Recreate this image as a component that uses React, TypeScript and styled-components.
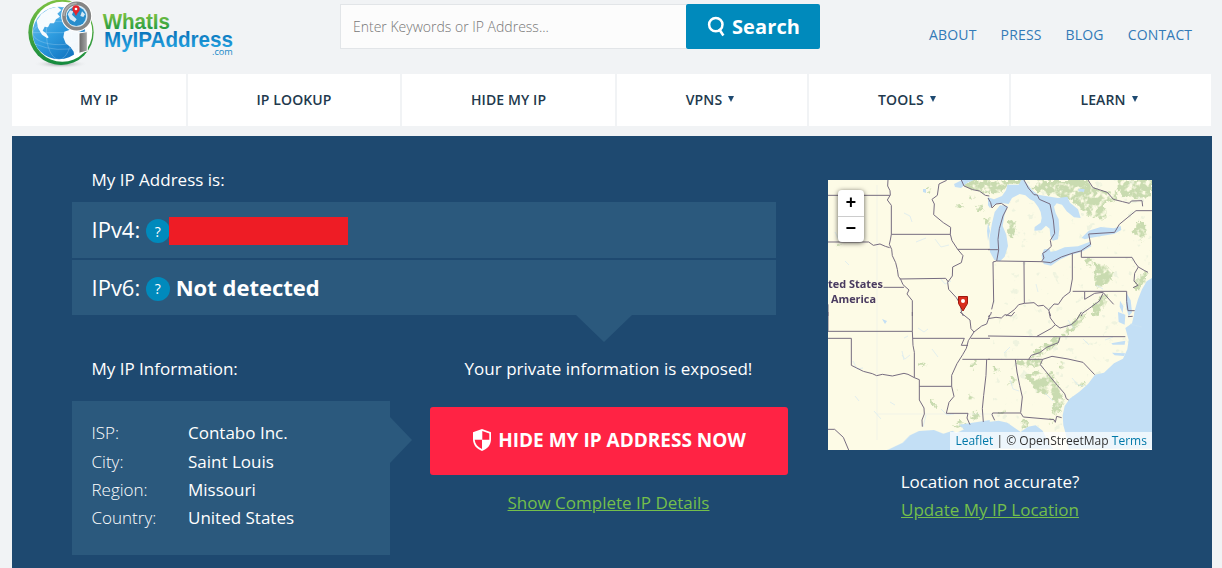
import React from "react";
import styled, { createGlobalStyle } from "styled-components";

const GlobalStyle = createGlobalStyle`
  * { box-sizing: border-box; }
  body { margin: 0; background: #f1f3f5; font-family: "Open Sans", sans-serif; overflow: hidden; }
  a { color: inherit; }
`;

const Page = styled.div`
  width: 1222px;
  height: 568px;
  overflow: hidden;
`;

const Header = styled.header`
  display: flex;
  height: 74px;
  padding-left: 20px;
`;

const LogoLink = styled.a`
  display: block;
  width: 230px;
  height: 72px;
  margin-right: 90px;
`;

const SearchForm = styled.form`
  display: flex;
  height: 45px;
  margin: 4px 0 0;
`;

const SearchInput = styled.input`
  width: 346px;
  height: 45px;
  padding: 0 12px;
  border: 1px solid #e2e5e8;
  border-right: 0;
  border-radius: 0;
  background: #fcfcfc;
  font: 300 14px "Open Sans", sans-serif;
  color: #555;
  outline: 0;
  &::placeholder { color: #777; opacity: 1; }
`;

const SearchButton = styled.button`
  display: flex;
  align-items: center;
  width: 134px;
  height: 45px;
  padding: 0 0 0 21px;
  gap: 7px;
  border: 0;
  border-radius: 2px;
  background: #008abc;
  color: #fff;
  font: 700 20px "Open Sans", sans-serif;
  letter-spacing: 0.1px;
`;

const TopLinks = styled.nav`
  display: flex;
  gap: 24px;
  margin: 24px 0 0 109px;
  font-size: 14px;
  font-weight: 500;
  line-height: 22px;
  letter-spacing: 0.17px;
  color: #337ab7;
  a { text-decoration: none; }
`;

const MainNav = styled.nav`
  display: grid;
  grid-template-columns: 174px 212px 213px 190px 200px 200px;
  gap: 2px;
  height: 52px;
  margin: 0 12px;
`;

const NavItem = styled.a<{ $menu?: boolean }>`
  display: flex;
  align-items: center;
  justify-content: center;
  gap: 6px;
  padding: 0 ${(p) => (p.$menu ? 4 : 0)}px 2px 0;
  background: #fff;
  color: #22394d;
  font-size: 14px;
  font-weight: 650;
  letter-spacing: 0.1px;
  text-decoration: none;
`;

const Caret = styled.span`
  border: 3.5px solid transparent;
  border-top: 6px solid #1e4a72;
  border-bottom: 0;
`;

const Panel = styled.main`
  display: flex;
  gap: 52px;
  width: 1200px;
  height: 432px;
  margin: 10px 0 0 12px;
  padding: 32px 60px 0;
  background: #1e4970;
  color: #fff;
  font-size: 17px;
`;

const Details = styled.section`
  width: 704px;
`;

const Label = styled.div`
  height: 24px;
  line-height: 24px;
  padding-left: 19.5px;
`;

const AddressRows = styled.div`
  position: relative;
  display: grid;
  grid-template-rows: 56px 55px;
  gap: 2px;
  margin-top: 10px;
  &::after {
    content: "";
    position: absolute;
    left: 504px;
    top: 113px;
    border: 28px solid transparent;
    border-top: 27px solid #2b597d;
    border-bottom: 0;
  }
`;

const AddressRow = styled.div`
  display: flex;
  align-items: center;
  padding: 0 0 2px 19.5px;
  background: #2b597d;
  font-size: 22px;
`;

const HelpBadge = styled.span`
  display: flex;
  align-items: center;
  justify-content: center;
  width: 24px;
  height: 24px;
  margin: 4px 0 0 5.5px;
  border-radius: 50%;
  background: #008abc;
  font-size: 14px;
  font-weight: 500;
`;

const Redaction = styled.span`
  width: 179px;
  height: 28px;
  margin: 4px 0 0 -1px;
  background: #ee1c25;
`;

const AddressValue = styled.strong`
  margin-left: 6px;
`;

const LowerRow = styled.div`
  display: flex;
  gap: 40px;
  width: 716px;
  margin-top: 42px;
`;

const InfoColumn = styled.div`
  width: 318px;
`;

const InfoBox = styled.dl`
  position: relative;
  display: grid;
  grid-template-columns: 96.5px 1fr;
  grid-template-rows: 29px 28px 28px 28px;
  height: 154px;
  margin: 20px 0 0;
  padding: 18px 19.5px;
  background: #2b597d;
  line-height: 28px;
  dt { font-weight: 300; }
  dd { margin: 0; font-weight: 500; }
  &::after {
    content: "";
    position: absolute;
    left: 318px;
    top: 16px;
    border: 23px solid transparent;
    border-left: 22px solid #2b597d;
    border-right: 0;
  }
`;

const ActionColumn = styled.div`
  display: flex;
  flex-direction: column;
  align-items: center;
  width: 357px;
  line-height: 24px;
`;

const HideButton = styled.a`
  display: flex;
  align-items: center;
  justify-content: center;
  gap: 7px;
  align-self: flex-start;
  width: 358px;
  height: 68px;
  margin: 26px 0 16px;
  padding: 0 0 2px 1px;
  border-radius: 3px;
  background: #ff2344;
  font-size: 19px;
  font-weight: 700;
  text-decoration: none;
`;

const GreenLink = styled.a`
  color: #74bf4b;
  text-decoration: underline;
`;

const Location = styled.aside`
  display: flex;
  flex-direction: column;
  align-items: center;
  width: 324px;
  padding-top: 12px;
  line-height: 28px;
`;

const MapFrame = styled.div`
  position: relative;
  width: 324px;
  height: 270px;
  margin-bottom: 18px;
  overflow: hidden;
  > svg { display: block; }
`;

const ZoomControl = styled.div`
  position: absolute;
  left: 10px;
  top: 10px;
  width: 26px;
  border-radius: 4px;
  background: #fff;
  box-shadow: 0 1px 5px rgba(0, 0, 0, 0.65);
`;

const ZoomButton = styled.div`
  height: 26px;
  text-align: center;
  color: #000;
  font: bold 18px/27px "Liberation Mono", monospace;
  & + & { border-top: 1px solid #ccc; line-height: 25px; }
`;

const Attribution = styled.div`
  position: absolute;
  right: 0;
  bottom: 0;
  height: 18px;
  padding: 0 5px;
  background: rgba(255, 255, 255, 0.7);
  color: #333;
  font-size: 12px;
  line-height: 18px;
  letter-spacing: 0.02px;
  white-space: nowrap;
  a { color: #0078a8; text-decoration: none; }
`;

const Logo = () => (
  <svg width="230" height="72" viewBox="0 0 690 216">
    <defs>
      <linearGradient id="green" x1="0" y1="0" x2="0" y2="1">
        <stop offset="0" stopColor="#7cc142" />
        <stop offset="1" stopColor="#138a3e" />
      </linearGradient>
      <linearGradient id="greenText" x1="0" y1="0" x2="0" y2="1">
        <stop offset=".2" stopColor="#7cc142" />
        <stop offset=".85" stopColor="#219a43" />
      </linearGradient>
      <linearGradient id="blue" x1="0" y1="0" x2="0" y2="1">
        <stop offset=".2" stopColor="#0873ba" />
        <stop offset=".9" stopColor="#25a5e2" />
      </linearGradient>
      <linearGradient id="globe" x1="0" y1="0" x2=".8" y2="1">
        <stop offset="0" stopColor="#7cc5ef" />
        <stop offset=".5" stopColor="#2f9de0" />
        <stop offset="1" stopColor="#0f6fbd" />
      </linearGradient>
      <linearGradient id="steel" x1="0" y1="0" x2="1" y2="0">
        <stop offset="0" stopColor="#666" />
        <stop offset="1" stopColor="#aaa" />
      </linearGradient>
      <radialGradient id="shadow">
        <stop offset="0" stopColor="#8d9094" />
        <stop offset="1" stopColor="#f1f3f5" stopOpacity="0" />
      </radialGradient>
    </defs>
    <ellipse cx="122" cy="192" rx="82" ry="13" fill="url(#shadow)" />
    <circle cx="123" cy="97" r="98" fill="url(#green)" />
    <circle cx="127" cy="95" r="90" fill="#fff" />
    <circle cx="117" cy="99" r="79" fill="url(#globe)" />
    <path d="M50 62 64 42 86 27 112 20 124 30 112 41 120 50 108 58 102 70 90 70 84 82 74 80 68 92 78 100 86 112 82 115 66 104 54 84ZM133 95 150 89 178 94 204 102 200 136 184 158 163 172 161 155 152 142 137 130 130 112Z" fill="#fff" opacity=".95" />
    <g fill="none" stroke="#fff" strokeWidth="1.200" opacity=".5">
      <ellipse cx="117" cy="99" rx="38" ry="79" />
      <ellipse cx="117" cy="99" rx="79" ry="35" />
      <path d="M45 132Q110 160 185 140M38 98H196M60 44Q120 65 180 44" />
    </g>
    <path d="m177 99 25-4v58l-25 7Z" fill="url(#steel)" stroke="#fff" strokeWidth="3" />
    <circle cx="170" cy="48" r="38" fill="#e7f4fc" stroke="#fff" strokeWidth="17" />
    <circle cx="170" cy="48" r="38" fill="#d6ebf7" stroke="#858585" strokeWidth="11" />
    <path d="M132 48A38 38 0 0 1 170 10" fill="none" stroke="#adadad" strokeWidth="5" />
    <circle cx="169" cy="49" r="29" fill="#278dcc" />
    <path d="M143 43 150 31 160 34 156 44 170 58 164 66 150 58ZM186 34 195 43 190 51 181 48Z" fill="#fff" opacity=".8" />
    <path d="M168 48C163 36 157 35 157 27a11 11 0 0 1 22 0c0 8-6 9-11 21Z" fill="#e5242c" />
    <circle cx="168" cy="27" r="4" fill="#fff" />
    <g fontFamily="Liberation Sans, sans-serif" strokeLinejoin="round">
      <text x="248" y="86" fontSize="65" fontWeight="700" fill="url(#greenText)" textLength="202" lengthAdjust="spacingAndGlyphs">WhatIs</text>
      <text x="252" y="140" fontSize="66" fontWeight="700" fill="url(#blue)" textLength="387" lengthAdjust="spacingAndGlyphs">MyIPAddress</text>
      <text x="576" y="165" fontSize="29" fontFamily="Open Sans, sans-serif" fontWeight="500" fill="#1687c7" textLength="62" lengthAdjust="spacingAndGlyphs">.com</text>
    </g>
  </svg>
);

const SearchIcon = () => (
  <svg width="18" height="22" viewBox="0 0 18 22" fill="none" stroke="#fff">
    <circle cx="8.800" cy="8.600" r="6.700" strokeWidth="2.500" />
    <path d="m12 13 4.400 6.400" strokeWidth="2.600" />
  </svg>
);

const ShieldIcon = () => (
  <svg width="18" height="22" viewBox="0 0 18 22">
    <path d="M9 0 18 3.300V10c0 6-3.400 9.700-9 12-5.600-2.300-9-6-9-12V3.300Z" fill="#fff" />
    <path d="M9.300 2 16.300 4.500V10.800H9.300ZM1.700 10.800H9V20C4.500 18 2.100 15 1.700 10.800Z" fill="#ff2344" />
  </svg>
);

const RegionMap = () => (
  <svg width="324" height="270" viewBox="0 0 324 270">
    <defs>
      <filter id="foliage" x="0" y="0" width="100%" height="100%" filterUnits="userSpaceOnUse" primitiveUnits="userSpaceOnUse">
        <feTurbulence type="fractalNoise" baseFrequency=".16" numOctaves="3" seed="8" result="noise" />
        <feDisplacementMap in="SourceGraphic" in2="noise" scale="9" xChannelSelector="R" yChannelSelector="G" result="rough" />
        <feColorMatrix in="noise" values="0 0 0 0 0  0 0 0 0 0  0 0 0 0 0  5 0 0 0 -1.600" result="grain" />
        <feComposite in="rough" in2="grain" operator="in" />
      </filter>
      <filter id="specks" x="0" y="0" width="100%" height="100%">
        <feTurbulence type="fractalNoise" baseFrequency=".12" numOctaves="3" seed="21" />
        <feColorMatrix values="0 0 0 0 .82  0 0 0 0 .88  0 0 0 0 .72  12 0 0 0 -8" />
      </filter>
    </defs>
    <rect width="324" height="270" fill="#fdfbe6" />
    <rect x="165" width="159" height="270" filter="url(#specks)" opacity=".7" />

    {/* vegetation */}
    <g fill="#c9dbb0" filter="url(#foliage)">
      <g transform="translate(-4 -4) scale(.33333)">
        <path d="M415 18 450 12H498V55L470 45 440 40 418 28ZM397 88l12-6 12 8-6 8-17-1ZM457 90l18-5 4 18-12 8-10-8ZM436 62l14-4 8 10-12 3ZM480 130l17-8v30l-12-8ZM38 208l14 0-5 8ZM308 38l10-4 2 12-10 2Z" />
      </g>
      <g transform="translate(160 -4) scale(.33333)">
        <path d="M0 22 40 12 108 12 100 28 60 22 42 50 20 52 0 42ZM142 12H300L322 40 385 48 392 66 350 84 356 128 300 120 278 98 250 70 170 52 140 42ZM392 12H492V64L440 66 392 50Z" />
        <path d="m62 136 16-4 8 12-7 10 6 16-14 12-17-7 4-15ZM440 150l20-16 14 8 2 28-14 24-20-8-5-20ZM320 260l36 10 22 20-8 30-48 14-6-40ZM292 252l20-5 4 20-18 8ZM440 318l20-26 20-5-12 40-22 20Z" />
        <path d="m310 410 30-60 20 10-28 60Z" />
      </g>
      <g transform="translate(-4 132) scale(.33333)">
        <path d="m442 152 14-10 3 12-13 15-7-6ZM318 258l8 0 8 16 10 10-4 8-14-14ZM432 246l8-5 10 20-15 2ZM445 300l15-4 8 18-6 10-20-4ZM392 230l8 2-3 10ZM287 154l22 2-6 5-14 0ZM390 340l20-10 28 4 18 30-20 0Z" />
      </g>
      <g transform="translate(160 132) scale(.33333)">
        <path d="m86 145 72-3 8 14-30 10-28 0-22-8ZM126 136l34-30 40-30 20 0-18 28-42 26ZM220 70l52-58 25-12-8 24-28 26-28 26ZM60 216l22-22 4 6-18 20ZM210 155l12-2 6 12-12 6ZM272 210l20 4-12 14-9-8ZM16 170l16 0 4 12-14 0ZM104 332l20-3-2 10-20 10-8-6ZM182 322l14 0 1 14-12-2ZM34 298l22 2-9 6-12-1Z" />
        <path d="M110 195 140 176 165 185 196 180 205 205 220 230 228 254 226 290 205 308 190 300 200 270 180 246 150 240 130 218Z" />
      </g>
    </g>

    {/* water */}
    <g fill="#c3dff5">
      <g transform="translate(160 -4) scale(.33333)">
        <path d="M6 96 22 84 36 80 62 84 72 66 95 54 112 58 126 70 138 76 151 94 158 108 161 126 158 140 140 153 139 164 160 163 174 149 185 158 187 180 194 194 210 190 214 160 212 130 203 112 198 92 206 82 222 86 236 106 258 124 278 126 270 100 246 80 238 62 210 66 150 56 132 42 108 12 100 12 92 26 58 26 54 43 42 60 18 70 0 64 0 88Z" />
        <path d="M36 88 60 90 50 115 44 150 55 176 60 210 50 242 36 256 19 252 6 228 4 188 12 142 20 108Z" />
        <path d="M161 242 176 230 205 224 230 214 270 211 306 197 310 211 280 228 244 238 215 251 189 269 167 264ZM281 185 302 164 338 153 378 157 398 150 400 162 378 174 340 180 306 186 290 190ZM160 240l8-20 16-2 5 12-16 17ZM272 38l18 1-2 9-17-2Z" />
        <path d="M492 306 476 316 462 340 450 370 440 404 438 424H504V306ZM414 348l14 25 4 36-10 12-8-28ZM396 374l10 16-2 22-9-20Z" />
      </g>
      <g transform="translate(-4 132) scale(.33333)">
        <path d="M190 414 236 392 258 370 285 357 330 354 358 365 386 356 396 364 420 352 405 338 435 334 460 330 498 324V420H190Z" />
      </g>
      <g transform="translate(160 132) scale(.33333)">
        <path d="M0 330 32 326 58 332 86 352 98 360 120 344 143 340 164 356 182 392 196 410H0ZM440 0 432 34 412 48 422 84 418 112 405 140 378 154 348 182 321 188 300 216 274 239 245 260 230 282 224 310 226 340 234 368 242 410H492V0Z" />
        <path d="m390 0 22 8-2 30-18-8ZM370 94l42-8-2 12-36 0ZM372 122l40 2-4 8-28-2Z" />
      </g>
    </g>
    <g fill="none" stroke="#cde4f3" strokeWidth=".7" opacity=".8">
      <path d="m7 52 4 8 2-4M17 81l4 4M76 33l6 3 2 6M88 62l10-4M107 59l6 8 8-2M112 98l5 6 6-3M27 101l10 5M90 148l6 4 4-3M74 175l3 4 5-4M76 158l4-2M25 181l4 8 6-1M74 171l2 9M27 216l4 5M46 231l7 8M62 222l5 3M104 169l6 8M113 229l6 6 7-1M182 200l3 9 6 2M244 198l6 7 6 1M255 159l6 6M277 160l8-3M208 104l2 8M268 105l7 4M176 173l6-6M302 144l12 3M217 213l8 8M240 140l6 9M98 235l-3 12" />
      <path d="M49 234H164M49 5V260" opacity=".4" />
    </g>
    <g fill="#c3dff5">
      <path d="m95 9 3 0 0 4-3-1ZM126 4l8-4h12l-7 3-6 5-6-1ZM160 43l2 8-2 10-1-10ZM54 139l5 2-2 3Z" />
    </g>

    {/* state borders */}
    <g fill="none" stroke="#756b80" strokeWidth="3" strokeLinejoin="round">
      <g transform="translate(-4 -4) scale(.33333)">
        <path d="M12 58H198M192 12 191 30 198 44 199 57 190 72 202 88V175L199 192 196 205 203 220 205 239 215 260 220 280 223 301 230 310 237 326 255 342 249 354 265 374V420M12 198H134L148 208 168 204 184 211 197 215M202 175H379L380 154 358 140 329 116 331 84 324 70 340 58 345 24 368 13M379 175 384 194 401 220 417 239 412 260 386 273 385 300 371 319 374 340 397 365 409 385 413 410 418 420M227 309 365 307 373 318M401 220H498M178 334H240M412 12 420 30 446 41 466 45 484 58 496 60M12 385V420" />
      </g>
      <g transform="translate(160 -4) scale(.33333)">
        <path d="M0 66 8 80 12 96 24 84 40 82 58 94 45 120 34 158 30 190 32 222 26 255 15 258 17 375 11 400M0 221H30M26 255 160 257 168 246 164 232 174 226 190 211 187 193 200 172 196 132 186 84 154 70 148 57 138 56 121 36 108 12M108 257 109 382 138 380 150 390 166 388 182 402 198 384 211 385 226 363 246 348 253 309V232M160 257 188 260 220 243 252 232 278 225 308 205 302 174 380 169 394 145 444 104H492M280 225V244H432L442 261 451 273 440 292 438 315 450 328 435 335M451 273 470 284 480 289M254 346H416V376L420 404H440M290 347V370L320 352 345 349 365 372 377 385M300 12 315 35 358 49 376 70 404 77 424 82 430 75 462 74 464 91M109 382 92 386 80 400 54 420M345 352 334 375 304 397 283 412 280 420M182 402 188 420" />
      </g>
      <g transform="translate(-4 132) scale(.33333)">
        <path d="M12 0V58H265V0M265 58 267 100 271 121V197M267 79H421L412 100H432M12 79H82V160L98 168 118 178 145 185 158 191 175 187 205 192 240 184 252 187 271 197 286 203V264L300 288 301 306 294 324 295 344M286 223H383V190L399 155 416 128 427 109 433 86 450 60 473 42 488 36 498 8M383 223 390 253 375 271 367 304H432L429 318 438 338M415 142H498M440 79H498M488 142 486 190 479 250 475 290 478 330M12 352H32L58 376 74 414M408 0 438 24 441 50 450 60" />
      </g>
      <g transform="translate(160 132) scale(.33333)">
        <path d="M0 72 145 74 190 49 202 38 187 18 183 0M202 38 216 48 250 38 265 25 280 0M145 74H412M0 142H164L192 133 240 141 285 151 320 188M216 76 211 92 176 106 155 122 130 130 122 142M82 142 87 180 95 220 103 255 98 302M164 142 157 158 188 196 208 220 230 245 235 260 242 264M98 303H14L12 308 20 325M98 303 106 315 198 323 202 331 206 313 221 317M0 20 24 16 40 18 51 8 70 12 80 0M420 14 434 13M0 14 8 8 10 0" />
      </g>
    </g>
    <g fontFamily="Open Sans, sans-serif" fontSize="11" fontWeight="700" fill="#4a3b60" stroke="#fdfbe6" strokeWidth="2" paintOrder="stroke">
      <text x="0" y="107.500" textLength="55" lengthAdjust="spacingAndGlyphs">ted States</text>
      <text x="3" y="122.500" textLength="45" lengthAdjust="spacingAndGlyphs">America</text>
    </g>
    <path d="M130.500 116.500h9v7L135 131l-4.500-7.500Z" fill="#d92d1d" stroke="#9e170e" strokeLinejoin="round" />
    <circle cx="135" cy="121" r="2" fill="#fff" />
  </svg>
);

const navItems = [
  { label: "MY IP" },
  { label: "IP LOOKUP" },
  { label: "HIDE MY IP" },
  { label: "VPNS", menu: true },
  { label: "TOOLS", menu: true },
  { label: "LEARN", menu: true },
];

const info = [
  ["ISP:", "Contabo Inc."],
  ["City:", "Saint Louis"],
  ["Region:", "Missouri"],
  ["Country:", "United States"],
];

export default function App() {
  return (
    <Page>
      <GlobalStyle />
      <Header>
        <LogoLink><Logo /></LogoLink>
        <SearchForm>
          <SearchInput placeholder="Enter Keywords or IP Address..." />
          <SearchButton type="button"><SearchIcon />Search</SearchButton>
        </SearchForm>
        <TopLinks>
          {["ABOUT", "PRESS", "BLOG", "CONTACT"].map((l) => <a key={l} href="#">{l}</a>)}
        </TopLinks>
      </Header>
      <MainNav>
        {navItems.map((n) => (
          <NavItem key={n.label} href="#" $menu={n.menu}>{n.label}{n.menu && <Caret />}</NavItem>
        ))}
      </MainNav>
      <Panel>
        <Details>
          <Label>My IP Address is:</Label>
          <AddressRows>
            <AddressRow>IPv4:<HelpBadge>?</HelpBadge><Redaction /></AddressRow>
            <AddressRow>IPv6:<HelpBadge>?</HelpBadge><AddressValue>Not detected</AddressValue></AddressRow>
          </AddressRows>
          <LowerRow>
            <InfoColumn>
              <Label>My IP Information:</Label>
              <InfoBox>
                {info.map(([k, v]) => (
                  <React.Fragment key={k}><dt>{k}</dt><dd>{v}</dd></React.Fragment>
                ))}
              </InfoBox>
            </InfoColumn>
            <ActionColumn>
              <span>Your private information is exposed!</span>
              <HideButton href="#"><ShieldIcon />HIDE MY IP ADDRESS NOW</HideButton>
              <GreenLink href="#">Show Complete IP Details</GreenLink>
            </ActionColumn>
          </LowerRow>
        </Details>
        <Location>
          <MapFrame>
            <RegionMap />
            <ZoomControl>
              <ZoomButton>+</ZoomButton>
              <ZoomButton>−</ZoomButton>
            </ZoomControl>
            <Attribution><a href="#">Leaflet</a> | © OpenStreetMap <a href="#">Terms</a></Attribution>
          </MapFrame>
          <span>Location not accurate?</span>
          <GreenLink href="#">Update My IP Location</GreenLink>
        </Location>
      </Panel>
    </Page>
  );
}
